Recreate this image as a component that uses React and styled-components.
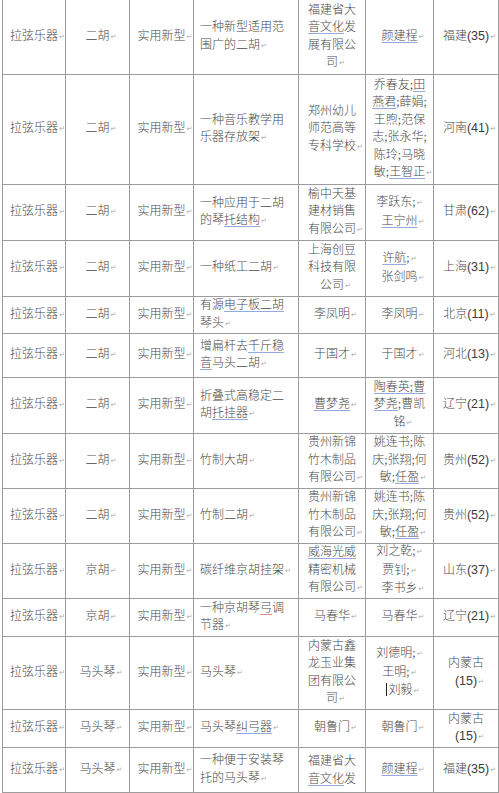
import React from 'react';
import styled, { createGlobalStyle } from 'styled-components';

// ===== GLOBAL =====
const GlobalStyle = createGlobalStyle`
  html, body {
    margin: 0;
    padding: 0;
    background: #ffffff;
    overflow: hidden;
  }
`;

const LINE = '#9d9d9d';

// ===== STYLED COMPONENTS =====
const Sheet = styled.div`
  width: 499px;
  height: 793px;
  overflow: hidden;
  box-sizing: border-box;
  padding-left: 2px;
  background: #fff;
`;

const Table = styled.div`
  border-left: 1px solid ${LINE};
`;

const Row = styled.div`
  display: grid;
  grid-template-columns: 63px 64px 64px 105px 67px 68px 65px;
  height: ${p => p.$h}px;
  box-sizing: border-box;
  border-bottom: 1px solid ${LINE};
  overflow: hidden;
`;

const Cell = styled.div`
  display: flex;
  align-items: ${p => (p.$top ? 'flex-start' : 'center')};
  justify-content: ${p => (p.$left ? 'flex-start' : 'center')};
  box-sizing: border-box;
  border-right: 1px solid ${LINE};
  padding: ${p => (p.$top ? '5px 4px 0' : p.$left ? '0 4px 0 6px' : '0 4px')};
  min-width: 0;
  overflow: hidden;
`;

const Text = styled.div`
  font-family: "Liberation Serif", "Noto Sans CJK SC", serif;
  font-size: 12px;
  font-weight: 300;
  line-height: 17.5px;
  color: #4a4a4a;
  white-space: nowrap;
  text-align: ${p => (p.$left ? 'left' : 'center')};
`;

const Num = styled.span`
  font-family: "Liberation Sans", "Noto Sans CJK SC", sans-serif;
  font-size: 12.5px;
  font-weight: 400;
  color: #3c3c3c;
`;

const Squiggle = styled.span`
  text-decoration: underline;
  text-decoration-color: ${p => (p.$red ? '#e08a8a' : '#93acdc')};
  text-decoration-thickness: 1px;
  text-underline-offset: 2px;
`;

// paragraph mark hangs after the text so it doesn't shift centring
const Mark = styled.span`
  display: inline-block;
  width: 6px;
  margin-left: 1px;
  margin-right: ${p => (p.$end ? '-7px' : '0')};
  font-family: "DejaVu Sans", sans-serif;
  font-size: 7px;
  font-weight: 400;
  color: #a9a9a9;
  vertical-align: 1px;
`;

const Caret = styled.span`
  display: inline-block;
  width: 1px;
  height: 13px;
  background: #222;
  vertical-align: -2px;
  margin-right: 1px;
`;

// ===== DATA =====
// _x_ = blue grammar underline, ~x~ = red spelling underline, ↵ = paragraph mark, | = caret
const rows = [
  { h: 75, c: ['拉弦乐器', '二胡', '实用新型', ['一种新型适用范', '围广的二胡'], ['福建省大', '_音文化_发', '展有限公', '司'], ['_颜建程_'], ['福建(35)']] },
  { h: 110, c: ['拉弦乐器', '二胡', '实用新型', ['一种音乐教学用', '乐器存放架'], ['郑州幼儿', '师范高等', '专科学校'], ['乔春友;_田_', '_燕君_;薛娟;', '王煦;范保', '志;张永华;', '陈玲;马晓', '敏;_王智正_'], ['河南(41)']] },
  { h: 56, c: ['拉弦乐器', '二胡', '实用新型', ['一种应用于二胡', '的琴_托结构_'], ['榆中天基', '建材销售', '有限公司'], ['李跃东;↵', '_王宁州_'], ['甘肃(62)']] },
  { h: 56, c: ['拉弦乐器', '二胡', '实用新型', ['一种纸工二胡'], ['上海创豆', '科技有限', '公司'], ['_许航_;↵', '张剑鸣'], ['上海(31)']] },
  { h: 37, c: ['拉弦乐器', '二胡', '实用新型', ['有源_电子板二胡_', '琴头'], ['李凤明'], ['李凤明'], ['北京(11)']] },
  { h: 44, c: ['拉弦乐器', '二胡', '实用新型', ['增扁杆去_千斤稳_', '_音_马头二胡'], ['于国才'], ['于国才'], ['河北(13)']] },
  { h: 56, c: ['拉弦乐器', '二胡', '实用新型', ['折叠式高稳定二', '胡_托挂器_'], ['_曹梦尧_'], ['_陶春英;曹_', '_梦尧_;曹凯', '铭'], ['辽宁(21)']] },
  { h: 55, c: ['拉弦乐器', '二胡', '实用新型', ['竹制大胡'], ['贵州新锦', '竹木制品', '有限公司'], ['姚连书;陈', '庆;张翔;何', '敏;_任盈_'], ['贵州(52)']] },
  { h: 55, c: ['拉弦乐器', '二胡', '实用新型', ['竹制二胡'], ['贵州新锦', '竹木制品', '有限公司'], ['姚连书;陈', '庆;张翔;何', '敏;_任盈_'], ['贵州(52)']] },
  { h: 55, c: ['拉弦乐器', '京胡', '实用新型', ['碳纤维京胡挂架'], ['_威海光威_', '精密机械', '有限公司'], ['刘之乾;↵', '贾钊;↵', '李书乡'], ['山东(37)']] },
  { h: 38, c: ['拉弦乐器', '京胡', '实用新型', ['一种京胡琴~弓~调', '节器'], ['马春华'], ['马春华'], ['辽宁(21)']] },
  { h: 73, c: ['拉弦乐器', '马头琴', '实用新型', ['马头琴'], ['内蒙古鑫', '龙玉业集', '团有限公', '司'], ['刘德明;↵', '王明;↵', '|刘毅'], ['内蒙古', '(15)']] },
  { h: 38, c: ['拉弦乐器', '马头琴', '实用新型', ['马头琴_纠弓器_'], ['朝鲁门'], ['朝鲁门'], ['内蒙古', '(15)']] },
  { h: 45, last: true, c: ['拉弦乐器', '马头琴', '实用新型', ['一种便于安装琴', '托的马头琴'], ['福建省大', '_音文化_发'], ['_颜建程_'], ['福建(35)']] },
];

function renderLine(str, key) {
  const parts = str.split(/(_[^_]+_|~[^~]+~|\(\d+\)|↵|\|)/).filter(Boolean);
  return parts.map((p, i) => {
    const k = `${key}-${i}`;
    if (p === '↵') return <Mark key={k}>↵</Mark>;
    if (p === '|') return <Caret key={k} />;
    if (p.startsWith('_')) return <Squiggle key={k}>{p.slice(1, -1)}</Squiggle>;
    if (p.startsWith('~')) return <Squiggle key={k} $red>{p.slice(1, -1)}</Squiggle>;
    if (/^\(\d+\)$/.test(p)) return <Num key={k}>{p}</Num>;
    return <React.Fragment key={k}>{p}</React.Fragment>;
  });
}

function CellText({ lines, left, open }) {
  const list = Array.isArray(lines) ? lines : [lines];
  return (
    <Text $left={left}>
      {list.map((ln, i) => (
        <div key={i}>
          {renderLine(ln, i)}
          {i === list.length - 1 && !open && <Mark $end>↵</Mark>}
        </div>
      ))}
    </Text>
  );
}

// ===== MAIN COMPONENT =====
export default function App() {
  return (
    <>
      <GlobalStyle />
      <Sheet>
        <Table>
          {rows.map((r, ri) => (
            <Row key={ri} $h={r.h}>
              {r.c.map((cell, ci) => {
                const top = r.last && ci === 4;
                return (
                  <Cell key={ci} $left={ci === 3} $top={top}>
                    <CellText lines={cell} left={ci === 3} open={top} />
                  </Cell>
                );
              })}
            </Row>
          ))}
        </Table>
      </Sheet>
    </>
  );
}
